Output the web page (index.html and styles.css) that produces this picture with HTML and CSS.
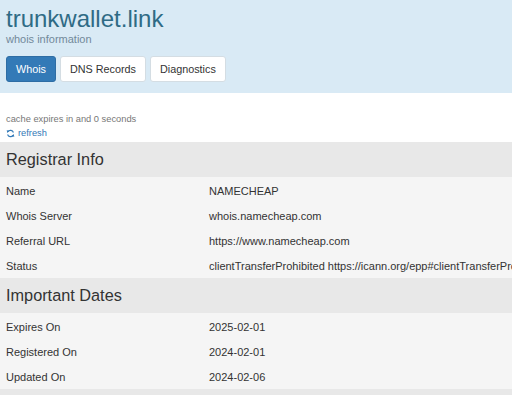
FILE: index.html
```html
<!DOCTYPE html>
<html lang="en">
<head>
<meta charset="utf-8">
<title>trunkwallet.link whois</title>
<link rel="stylesheet" href="styles.css">
</head>
<body>
<header class="hero">
  <h1 class="title">trunkwallet.link</h1>
  <p class="subtitle">whois information</p>
  <nav class="tabs">
    <a class="tab tab-active">Whois</a>
    <a class="tab">DNS Records</a>
    <a class="tab">Diagnostics</a>
  </nav>
</header>
<main>
  <div class="cache">
    <p class="cache-line">cache expires in and 0 seconds</p>
    <a class="refresh"><svg class="refresh-icon" viewBox="0 0 16 16" width="9" height="9" aria-hidden="true"><path d="M13.2 6.2A5.6 5.6 0 0 0 3.4 4.6" fill="none" stroke="currentColor" stroke-width="2"/><polygon points="1.2,2.2 6.2,3.2 2.4,7.2" fill="currentColor"/><path d="M2.8 9.8A5.6 5.6 0 0 0 12.6 11.4" fill="none" stroke="currentColor" stroke-width="2"/><polygon points="14.8,13.8 9.8,12.8 13.6,8.8" fill="currentColor"/></svg>refresh</a>
  </div>
  <section class="section">
    <h2 class="section-title">Registrar Info</h2>
    <div class="rows">
      <div class="row"><span class="label">Name</span><span class="value">NAMECHEAP</span></div>
      <div class="row"><span class="label">Whois Server</span><span class="value">whois.namecheap.com</span></div>
      <div class="row"><span class="label">Referral URL</span><span class="value">https://www.namecheap.com</span></div>
      <div class="row"><span class="label">Status</span><span class="value">clientTransferProhibited https://icann.org/epp#clientTransferProhibited</span></div>
    </div>
  </section>
  <section class="section">
    <h2 class="section-title">Important Dates</h2>
    <div class="rows">
      <div class="row"><span class="label">Expires On</span><span class="value">2025-02-01</span></div>
      <div class="row"><span class="label">Registered On</span><span class="value">2024-02-01</span></div>
      <div class="row"><span class="label">Updated On</span><span class="value">2024-02-06</span></div>
    </div>
  </section>
  <section class="section">
    <h2 class="section-title">Name Servers</h2>
  </section>
</main>
</body>
</html>
```
FILE: styles.css
```css
html, body {
  margin: 0;
  padding: 0;
}
body {
  font-family: "Liberation Sans", Arial, sans-serif;
  color: #333;
  background: #fff;
  overflow: hidden;
}
.hero {
  background: #d9eaf5;
  padding: 5px 6px 11px;
}
.title {
  margin: 0;
  font-size: 24px;
  line-height: 28px;
  font-weight: normal;
  color: #2f6b85;
}
.subtitle {
  margin: 0;
  font-size: 11px;
  line-height: 13px;
  color: #72899a;
}
.tabs {
  display: flex;
  gap: 4px;
  margin-top: 10px;
}
.tab {
  display: block;
  font-size: 10.8px;
  line-height: 14px;
  padding: 5px 9px;
  border: 1px solid #d4dde3;
  border-radius: 3px;
  background: #fff;
  color: #333;
}
.tab-active {
  background: #337ab7;
  border-color: #2e6da4;
  color: #fff;
}
.cache {
  padding: 19px 6px 2px;
  font-size: 9.3px;
  line-height: 14px;
}
.cache-line {
  margin: 0;
  color: #777;
}
.refresh {
  display: flex;
  align-items: center;
  gap: 3px;
  color: #337ab7;
}
.section-title {
  margin: 0;
  padding: 8px 6px;
  font-size: 16.3px;
  line-height: 19px;
  font-weight: normal;
  background: #e8e8e8;
  color: #333;
}
.rows {
  background: #f5f5f5;
  padding-top: 1px;
}
.row {
  display: grid;
  grid-template-columns: 203px 1fr;
  font-size: 11px;
  line-height: 23px;
  padding-top: 2px;
  white-space: nowrap;
}
.label {
  padding-left: 6px;
}
.value {
  padding-left: 6px;
}
```
